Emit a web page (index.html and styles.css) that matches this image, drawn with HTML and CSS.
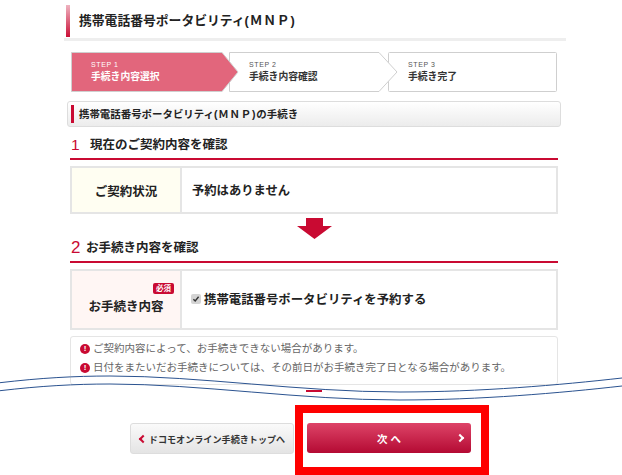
FILE: index.html
```html
<!DOCTYPE html>
<html lang="ja">
<head>
    <meta charset="UTF-8">
    <meta name="viewport" content="width=device-width, initial-scale=1.0">
    <title>携帯電話番号ポータビリティ(ＭＮＰ)</title>
    <link rel="stylesheet" href="styles.css">
</head>
<body>
    <div class="page">
        <div class="main">
            <div class="page-title"><h1>携帯電話番号ポータビリティ<span class="mnp">(ＭＮＰ)</span></h1></div>

            <div class="steps">
                <div class="step step-current">
                    <svg class="step-shape" width="168" height="40" viewBox="0 0 168 40"><polygon points="0.5,0.5 151,0.5 167,20 151,39.5 0.5,39.5" fill="#e2667c" stroke="#cfcfcf"/></svg>
                    <span class="step-no">STEP 1</span>
                    <span class="step-name">手続き内容選択</span>
                </div>
                <div class="step">
                    <svg class="step-shape" width="169" height="40" viewBox="0 0 169 40"><polygon points="0.5,0.5 150,0.5 168,20 150,39.5 0.5,39.5" fill="#fff" stroke="#cfcfcf"/></svg>
                    <span class="step-no">STEP 2</span>
                    <span class="step-name">手続き内容確認</span>
                </div>
                <div class="step step-last">
                    <svg class="step-shape" width="169" height="40" viewBox="0 0 169 40"><rect x="0.5" y="0.5" width="168" height="39" rx="1" fill="#fff" stroke="#cfcfcf"/></svg>
                    <span class="step-no">STEP 3</span>
                    <span class="step-name">手続き完了</span>
                </div>
            </div>

            <h2 class="panel-title">携帯電話番号ポータビリティ<span class="mnp">(ＭＮＰ)</span>の手続き</h2>

            <h3 class="section-title"><span class="section-no section-no-wide">1</span>現在のご契約内容を確認</h3>
            <div class="info-row info-contract">
                <div class="info-head info-head-yellow">ご契約状況</div>
                <div class="info-body">予約はありません</div>
            </div>

            <svg class="down-arrow" width="35" height="21" viewBox="0 0 35 21"><polygon points="9,0 26,0 26,8 35,8 17.5,21 0,8 9,8" fill="#c90a32"/></svg>

            <h3 class="section-title section-title-2"><span class="section-no">2</span>お手続き内容を確認</h3>
            <div class="info-row info-procedure">
                <div class="info-head info-head-pink">
                    <span class="required">必須</span>
                    <span>お手続き内容</span>
                </div>
                <div class="info-body info-body-check">
                    <svg class="check" width="10" height="10" viewBox="0 0 10 10"><rect width="10" height="10" rx="2" fill="#d4d4d4"/><path d="M2.4 5.2 4.2 7 7.6 2.8" fill="none" stroke="#333" stroke-width="1.4"/></svg>
                    <span class="check-label">携帯電話番号ポータビリティを予約する</span>
                </div>
            </div>

            <div class="notes">
                <p class="note"><span class="note-icon">!</span>ご契約内容によって、お手続きできない場合があります。</p>
                <p class="note"><span class="note-icon">!</span>日付をまたいだお手続きについては、その前日がお手続き完了日となる場合があります。</p>
            </div>

            <div class="next-mark"></div>
        </div>

        <svg class="cut" width="622" height="50" viewBox="0 0 622 50">
            <path d="M0 30.7 C40 26 75 24 110 24 C200 24 300 40 400 40 C480 40 560 33 622 26 V50 H0 Z" fill="#fff"/>
            <path d="M0 22.7 C40 18 75 16 110 16 C200 16 300 32 400 32 C480 32 560 25 622 18" fill="none" stroke="#2b5390"/>
            <path d="M0 30.7 C40 26 75 24 110 24 C200 24 300 40 400 40 C480 40 560 33 622 26" fill="none" stroke="#2b5390"/>
        </svg>

        <div class="actions">
            <a class="btn btn-back"><span class="chev chev-left"></span>ドコモオンライン手続きトップへ</a>
            <div class="highlight">
                <a class="btn btn-next">次 へ<span class="chev chev-right"></span></a>
            </div>
        </div>
    </div>
</body>
</html>
```

FILE: styles.css
```css
* {
    margin: 0;
    padding: 0;
    box-sizing: border-box;
}

body {
    background: #fff;
    color: #222;
    font-family: "Liberation Sans", "Noto Sans CJK JP", sans-serif;
}

.page {
    position: relative;
    width: 622px;
    height: 475px;
    overflow: hidden;
}

.main {
    height: 410px;
    padding-left: 64px;
    width: 566px;
    overflow: hidden;
}

.page-title {
    height: 41px;
    padding: 5px 0 0 2px;
    border-bottom: 3px solid #eee;
}

.page-title h1 {
    height: 32px;
    padding-left: 9px;
    font-size: 12.8px;
    font-weight: 700;
    line-height: 32px;
    border-left: 4px solid;
    border-image: linear-gradient(#f0b9c5, #c90a32) 1;
}

.mnp {
    letter-spacing: 0.8px;
}

.steps {
    display: flex;
    height: 40px;
    margin: 11px 0 0 7px;
}

.step {
    position: relative;
    flex: none;
    width: 169px;
    height: 40px;
    margin-right: -10px;
    padding: 9px 0 0 20px;
    z-index: 2;
}

.step-current {
    width: 168px;
    z-index: 3;
}

.step-last {
    z-index: 1;
}

.step-shape {
    position: absolute;
    top: 0;
    left: 0;
    z-index: -1;
}

.step-no {
    display: block;
    font-size: 7px;
    line-height: 8px;
    letter-spacing: 0.6px;
    color: #555;
}

.step-name {
    display: block;
    margin-top: 1px;
    font-size: 9.8px;
    font-weight: 700;
    line-height: 13px;
    color: #333;
}

.step-current .step-no,
.step-current .step-name {
    color: #fff;
}

.panel-title {
    position: relative;
    width: 494px;
    height: 26px;
    margin: 9px 0 0 3px;
    padding-left: 11px;
    font-size: 10.45px;
    font-weight: 700;
    line-height: 25px;
    background: linear-gradient(#fff, #ececec);
    border: 1px solid #ddd;
    border-radius: 3px;
}

.panel-title::before {
    content: "";
    position: absolute;
    top: 3px;
    left: 3px;
    width: 3px;
    height: 18px;
    background: #c90a32;
}

.section-title {
    display: flex;
    align-items: center;
    width: 488px;
    height: 33px;
    margin-left: 6px;
    padding-top: 4px;
    font-size: 12.5px;
    font-weight: 700;
    line-height: 18px;
    border-bottom: 2px solid #c90a32;
}

.section-title-2 {
    height: 24px;
    padding-top: 0;
    align-items: flex-start;
}

.section-no {
    width: 16px;
    color: #c90a32;
    font-size: 17px;
    font-weight: 400;
    line-height: 18px;
    padding-left: 1px;
}

.section-no-wide {
    width: 20px;
    font-size: 15.5px;
}

.info-row {
    display: flex;
    width: 488px;
    margin-left: 6px;
    border: 2px solid #e5e5e5;
}

.info-contract {
    height: 48px;
    margin-top: 6px;
}

.info-procedure {
    height: 61px;
    margin-top: 6px;
}

.info-head {
    position: relative;
    flex: none;
    width: 110px;
    display: flex;
    align-items: center;
    justify-content: center;
    font-size: 12.5px;
    font-weight: 700;
    border-right: 2px solid #e5e5e5;
}

.info-head-yellow {
    background: #fffef2;
}

.info-head-pink {
    padding-top: 11px;
    background: #fff6f4;
}

.required {
    position: absolute;
    top: 12px;
    right: 6px;
    width: 21px;
    height: 11px;
    font-size: 7.5px;
    line-height: 11px;
    text-align: center;
    color: #fff;
    background: #c90a32;
    border-radius: 2px;
}

.info-body {
    display: flex;
    align-items: center;
    padding-left: 10px;
    font-size: 12.3px;
    font-weight: 700;
}

.info-body-check {
    gap: 3px;
    padding-left: 9px;
    padding-bottom: 1px;
}

.check-label {
    font-size: 12.4px;
}

.down-arrow {
    display: block;
    margin: 4px 0 0 233px;
}

.notes {
    width: 488px;
    height: 49px;
    margin: 6px 0 0 6px;
    padding: 2px 0 0 9px;
    color: #666;
    font-size: 10.5px;
    border: 1px solid #e5e5e5;
    border-radius: 3px;
}

.note {
    display: flex;
    align-items: center;
    height: 19px;
    line-height: 19px;
}

.note-icon {
    flex: none;
    width: 10px;
    height: 10px;
    margin-right: 3px;
    border-radius: 50%;
    background: #c90a32;
    color: #fff;
    font-size: 8px;
    font-weight: 700;
    line-height: 10px;
    text-align: center;
}

.next-mark {
    width: 16px;
    height: 2px;
    margin: 5px 0 0 242px;
    background: #c90a32;
}

.cut {
    position: absolute;
    top: 360px;
    left: 0;
}

.actions {
    position: absolute;
    top: 405px;
    left: 130px;
    display: flex;
    align-items: flex-start;
}

.btn {
    display: flex;
    align-items: center;
    justify-content: center;
    position: relative;
    font-weight: 700;
    border-radius: 3px;
}

.btn-back {
    width: 164px;
    height: 31px;
    margin: 18px 1px 0 0;
    padding-left: 10px;
    font-size: 9.1px;
    color: #333;
    background: linear-gradient(#fafafa, #e4e4e4);
    border: 1px solid #ddd;
}

.highlight {
    width: 194px;
    height: 70px;
    padding: 10px 0 0 4px;
    border: 8px solid #fe0000;
    background: #fff;
}

.btn-next {
    width: 164px;
    height: 30px;
    font-size: 10.5px;
    color: #fff;
    background: linear-gradient(#de4468, #b40a33);
}

.chev {
    position: absolute;
    top: 50%;
    width: 6px;
    height: 6px;
    border-top: 2.5px solid;
    border-right: 2.5px solid;
}

.chev-left {
    left: 9px;
    color: #c90a32;
    transform: translateY(-50%) rotate(-135deg);
}

.chev-right {
    right: 8px;
    color: #fff;
    transform: translateY(-50%) rotate(45deg);
}
```
